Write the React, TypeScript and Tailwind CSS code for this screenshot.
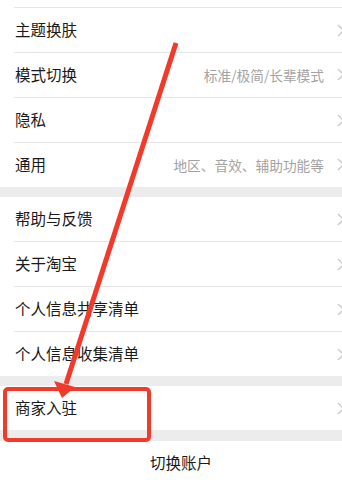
import React from 'react';

type Row = { label: string; hint?: string; last?: boolean };

const groupA: Row[] = [
  { label: '主题换肤' },
  { label: '模式切换', hint: '标准/极简/长辈模式' },
  { label: '隐私' },
  { label: '通用', hint: '地区、音效、辅助功能等', last: true },
];

const groupB: Row[] = [
  { label: '帮助与反馈' },
  { label: '关于淘宝' },
  { label: '个人信息共享清单' },
  { label: '个人信息收集清单', last: true },
];

function Chevron() {
  return (
    <svg width="8" height="13" viewBox="0 0 8 13" className="mr-[-3px] shrink-0">
      <path d="M1 1l5.5 5.5L1 12" fill="none" stroke="#c8c8c8" strokeWidth="1.3" />
    </svg>
  );
}

function SettingRow({ label, hint, last }: Row) {
  return (
    <div className="pl-[14px] bg-white">
      <div
        className={
          last
            ? 'h-[44px] flex items-center justify-between'
            : 'h-[45px] flex items-center justify-between border-b border-[#e6e6e6]'
        }
      >
        <span className="pl-px text-[15.5px] text-[#1a1a1a]">{label}</span>
        <div className="flex items-center gap-[13px]">
          {hint && <span className="text-[13.7px] text-[#a3a3a3]">{hint}</span>}
          <Chevron />
        </div>
      </div>
    </div>
  );
}

export default function App() {
  return (
    <div
      className="relative w-[342px] h-[486px] overflow-hidden bg-white"
      style={{ fontFamily: '"Noto Sans CJK SC", "Noto Sans", sans-serif' }}
    >
      <div className="pl-[14px] bg-white">
        <div className="h-[8px] border-b border-[#e6e6e6]" />
      </div>
      {groupA.map((r) => (
        <SettingRow key={r.label} {...r} />
      ))}
      <div className="h-[10px] bg-[#ececec]" />
      {groupB.map((r) => (
        <SettingRow key={r.label} {...r} />
      ))}
      <div className="h-[10px] bg-[#ececec]" />
      <SettingRow label="商家入驻" last />
      <div className="h-[11px] bg-[#ececec]" />
      <div className="h-[44px] flex items-center justify-center pl-[20px] bg-white">
        <span className="text-[15.5px] text-[#1a1a1a]">切换账户</span>
      </div>

      {/* annotation overlay */}
      <svg className="absolute inset-0 pointer-events-none" width="342" height="486" viewBox="0 0 342 486">
        <line x1="176" y1="43" x2="66" y2="384" stroke="#f2392a" strokeWidth="5" />
        <polygon points="54,381 75,387 62,398" fill="#f2392a" />
        <rect x="5" y="389" width="144" height="51" rx="3" fill="none" stroke="#f2392a" strokeWidth="4" />
      </svg>
    </div>
  );
}
